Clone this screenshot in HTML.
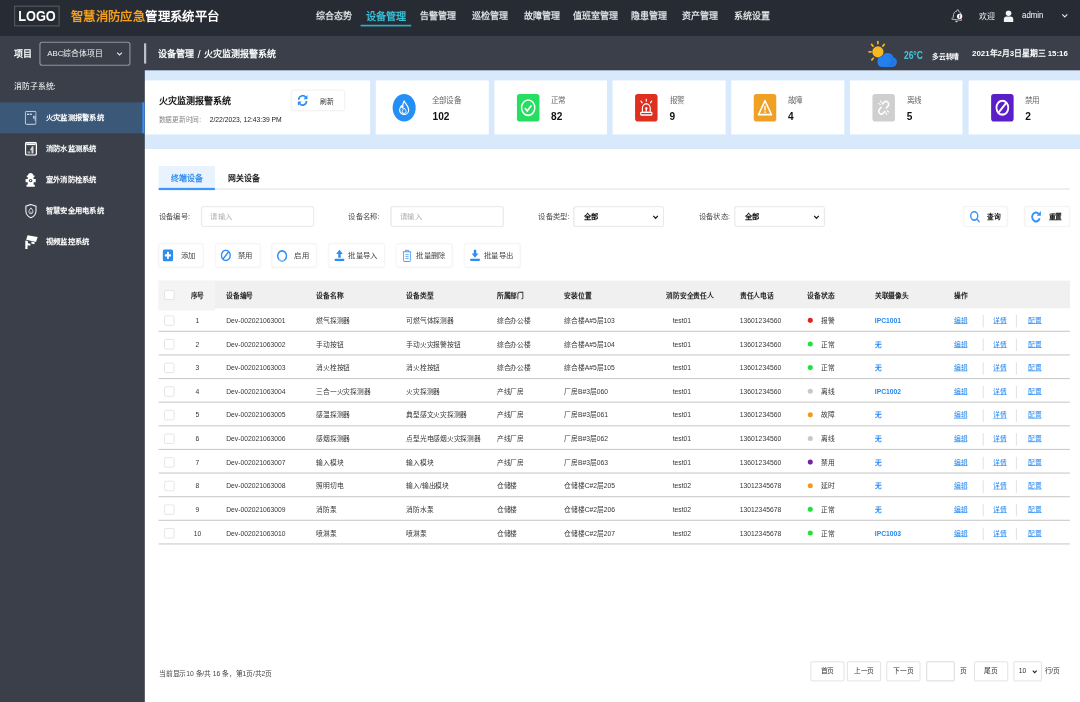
<!DOCTYPE html>
<html lang="zh-CN">
<head>
<meta charset="utf-8">
<title>智慧消防应急管理系统平台</title>
<style>
*{box-sizing:border-box;margin:0;padding:0}
html,body{width:1080px;height:702px;overflow:hidden;background:#fff}
body{font-family:"Liberation Sans",sans-serif;color:#333}
#stage{position:absolute;left:0;top:0;width:1920px;height:1248px;transform:scale(0.5625);transform-origin:0 0;filter:brightness(1);background:#fff;overflow:hidden}
svg{display:block}
/* top bar */
#top{position:absolute;left:0;top:0;width:1920px;height:64px;background:#272b34}
#logo{position:absolute;left:25px;top:10px;width:81px;height:37px;border:2px solid #565a63;color:#fff;font-weight:bold;font-size:27px;line-height:34px;text-align:center}
#logo span{display:inline-block;transform:scaleX(.84);transform-origin:50% 50%;margin:0 -10px}
#title{position:absolute;left:126px;top:0;height:64px;line-height:60px;font-size:22px;font-weight:bold;color:#fff;white-space:nowrap}
#title b{color:#f5a11d}
.nav{position:absolute;top:0;height:64px;line-height:58px;font-size:16px;font-weight:bold;color:#dddfe3;white-space:nowrap}
.nav.on{color:#38bfd6;font-weight:bold;font-size:18px}
.nav.on:after{content:"";position:absolute;left:-9px;right:-9px;top:43.500px;height:3px;background:#31adc4}
#top .t{position:absolute;top:0;height:64px;line-height:57px;font-size:14px;color:#f0f0f0;white-space:nowrap}
/* second bar */
#bar2{position:absolute;left:0;top:64px;width:1920px;height:61px;background:#3a3f4a;z-index:3}
#bar2 .t{position:absolute;top:0;height:60px;line-height:63px;color:#fff;white-space:nowrap}
#proj{position:absolute;left:70px;top:9.500px;width:162px;height:43px;border:2px solid #8e939d;border-radius:5px;color:#f2f2f2;font-size:14px;line-height:37px;padding-left:12px}
/* sidebar */
#side{position:absolute;left:0;top:124px;width:256.500px;height:1124px;background:#3a3f4a;z-index:2}
#sidebg{position:absolute;left:0;top:64px;width:256.500px;height:1190px;background:#3a3f4a;z-index:1}
#side .lab{position:absolute;left:25px;top:0;height:58px;line-height:60px;font-size:14px;color:#fff}
.mi{position:absolute;left:0;width:256.500px;height:55px;line-height:56px;color:#fff;font-size:13px;font-weight:bold;padding-left:81px}
.mi svg{position:absolute;left:44px;top:15px}
.mi.on{background:#3b5879;border-right:4px solid #3b8ff2}
/* main */
#main{position:absolute;left:256px;top:124px;width:1664px;height:1124px;background:#d8e9fc}
.card{position:absolute;top:19px;height:96px;background:#fff}
.card .lb{position:absolute;left:101px;top:25.500px;font-size:13.500px;line-height:20px;color:#666;white-space:nowrap}
.card .nm{position:absolute;left:101px;top:50.500px;font-size:18px;line-height:26px;font-weight:bold;color:#111}
.card .ic{position:absolute;left:40px;top:24px;width:40px;height:49px;border-radius:5px}
.card .ic svg{position:absolute;left:6px;top:8px;width:28px;height:33px}
#panel{position:absolute;left:0;top:141px;width:1664px;height:983px;background:#fff}
/* panel */
.tab{position:absolute;top:29.500px;width:100px;height:41px;line-height:44px;text-align:center;font-size:14px;font-weight:bold;color:#222}
.tab.on{background:#e9f3fe;color:#348ff1}
.fl{position:absolute;top:102px;height:36px;line-height:36px;font-size:13px;color:#4a4a4a;white-space:nowrap}
.inp{position:absolute;top:102px;height:36px;border:1px solid #dcdcdc;border-radius:4px;font-size:13px;line-height:34px;padding-left:15px;color:#b0b0b0;background:#fff;box-shadow:0 0 2px rgba(0,0,0,.05)}
.inp.sel{color:#111;font-weight:bold;padding-left:17px;font-size:13px}
.inp .chev{position:absolute;right:8.500px;top:14px;width:11px;height:9px}
.qb{position:absolute;top:102px;height:36px;border:1px solid #eee;border-radius:4px;font-size:12px;line-height:34px;padding-left:41px;color:#111;font-weight:bold;white-space:nowrap;box-shadow:0 0 3px rgba(0,0,0,.05)}
.ab{position:absolute;top:168px;height:42px;border:1px solid #efefef;border-radius:5px;font-size:13px;line-height:40px;padding-left:38px;color:#444;white-space:nowrap;box-shadow:0 0 3px rgba(0,0,0,.05)}
.ab .bi{position:absolute;left:6px;top:9px}
#tbl{position:absolute;left:26px;top:234px;width:1620px}
.tr{display:grid;grid-template-columns:38px 62px 180.500px 160px 161px 120px 181.300px 130.500px 120px 120px 140.500px 1fr;height:42px;line-height:44.500px;font-size:12px;color:#363636;border-bottom:2px solid #cccccc;white-space:nowrap}
.tr.th{height:49px;line-height:52.500px;background:#f0f0f0;font-weight:bold;color:#222;border-bottom:none}
.tr>div{overflow:visible;position:relative}
.c0,.c1{text-align:center}
.tr.th .c0,.tr.th .c1{background:#f4f4f4}
.c2{padding-left:20px}
.c7{padding-left:11px}
.th .c7{padding-left:0}
.cb{position:absolute;left:10px;top:13px;width:17.500px;height:17.500px;border:1.500px solid #d2d2d2;border-radius:3px;background:#fff}
.th .cb{top:16.500px}
.dot{display:inline-block;width:9px;height:9px;border-radius:50%;vertical-align:middle;margin:0 15px 2px 1px}
.cam{color:#2588f0;font-weight:bold}
.op a{color:#2588f0;text-decoration:underline}
.op s{display:inline-block;width:1.500px;height:22px;background:#e4e4e4;vertical-align:middle;margin:0 17px 0 27.500px}
.op s+a+s{margin:0 20px 0 16.500px}
.pb{position:absolute;top:911px;width:60px;height:35px;border:1.500px solid #cdcdcd;border-radius:2px;font-size:12px;line-height:33px;text-align:center;color:#333;white-space:nowrap;background:#fff}
</style>
</head>
<body>
<div id="stage">
<div id="top">
  <div id="logo"><span>LOGO</span></div>
  <div id="title"><b>智慧消防应急</b>管理系统平台</div>
  <div class="nav" style="left:562px">综合态势</div>
  <div class="nav on" style="left:650px">设备管理</div>
  <div class="nav" style="left:746px">告警管理</div>
  <div class="nav" style="left:839px">巡检管理</div>
  <div class="nav" style="left:931px">故障管理</div>
  <div class="nav" style="left:1018px">值班室管理</div>
  <div class="nav" style="left:1122px">隐患管理</div>
  <div class="nav" style="left:1213px">资产管理</div>
  <div class="nav" style="left:1305px">系统设置</div>
  <svg style="position:absolute;left:1690px;top:15px;transform:rotate(7deg)" width="22" height="27" viewBox="0 0 24 28"><path d="M11 3.2a1.6 1.6 0 0 1 3.2 0v1.2c3.4.8 5.6 3.7 5.6 7.4v5.4l2.2 3v1H3.2v-1l2.2-3v-5.4c0-3.7 2.200-6.600 5.600-7.400z" fill="none" stroke="#cfd0d3" stroke-width="1.600"/><path d="M10 23.500a2.600 2.600 0 0 0 5.200 0z" fill="#cfd0d3"/><circle cx="17.500" cy="14" r="5.200" fill="#fff"/><rect x="16.300" y="10.500" width="2.400" height="7" rx="1" fill="#e8413a"/></svg>
  <div class="t" style="left:1741px">欢迎</div>
  <svg style="position:absolute;left:1784px;top:18px" width="18" height="22" viewBox="0 0 20 24"><circle cx="10" cy="6" r="5.500" fill="#f2f2f2"/><path d="M0.500 23v-5c0-3 2.500-5.500 5.500-5.500h8c3 0 5.500 2.500 5.500 5.500v5z" fill="#f2f2f2"/></svg>
  <div class="t" style="left:1817px;top:-2px;color:#fff;font-size:17px;transform:scaleX(.82);transform-origin:0 50%">admin</div>
  <svg style="position:absolute;left:1887px;top:24px" width="12" height="8" viewBox="0 0 12 8"><path d="M1.500 1.500l4.500 4.500 4.500-4.500" fill="none" stroke="#e6e6e6" stroke-width="2"/></svg>
</div>
<div id="bar2">
  <div class="t" style="left:25px;font-size:16px;font-weight:bold">项目</div>
  <div id="proj">ABC综合体项目
    <svg style="position:absolute;right:12px;top:16px" width="11" height="8" viewBox="0 0 11 8"><path d="M1.200 1.500l4.300 4.300 4.300-4.300" fill="none" stroke="#e6e6e6" stroke-width="2"/></svg>
  </div>
  <div style="position:absolute;left:256px;top:13px;width:4px;height:36px;background:#bcbfc5"></div>
  <div class="t" style="left:280.500px;font-size:16px;font-weight:bold">设备管理<span style="margin:0 1px;font-size:20px;font-weight:normal;position:relative;top:1px"> / </span>火灾监测报警系统</div>
  <svg style="position:absolute;left:1542px;top:6px" width="54" height="50" viewBox="0 0 54 50">
    <g stroke="#f2b01e" stroke-width="3.200" stroke-linecap="round">
      <line x1="18.700" y1="4" x2="18.700" y2="7.500"/><line x1="7.500" y1="9" x2="10" y2="12"/><line x1="30" y1="9" x2="27.500" y2="12"/><line x1="3" y1="22.200" x2="6.500" y2="22.200"/><line x1="8" y1="36.500" x2="10.500" y2="33.500"/>
    </g>
    <circle cx="18.700" cy="22.200" r="10" fill="#f8b81f"/>
    <path d="M26 49h18a8.500 8.500 0 0 0 2.500-16.600a11 11 0 0 0-20.500-2.200a9.500 9.500 0 0 0 0 18.800z" fill="#2480ec"/>
    <path d="M28 47h16a6.500 6.500 0 0 0 1-12.900a9 9 0 0 0-8-6.100a11 11 0 0 1 3 14a9 9 0 0 1-12 5z" fill="#1b6fdc" opacity=".55"/>
  </svg>
  <div class="t" style="left:1607px;top:3px;font-size:19px;font-weight:bold;color:#3fc8dc;transform:scaleX(.79);transform-origin:0 50%">26°C</div>
  <div class="t" style="left:1657px;top:6px;font-size:12px;font-weight:bold">多云转晴</div>
  <div class="t" style="left:1728px;top:0px;font-size:14px;font-weight:bold">2021年2月3日星期三 15:16</div>
</div>
<div id="sidebg"></div>
<div id="side">
  <div class="lab">消防子系统:</div>
  <div class="mi on" style="top:58px">
    <svg width="21" height="25" viewBox="0 0 21 25"><rect x="1" y="1" width="19" height="23" rx="2" fill="none" stroke="#dfe6ee" stroke-width="1.600"/><rect x="4" y="5" width="3.500" height="2.400" fill="#dfe6ee"/><rect x="9" y="5" width="3.500" height="2.400" fill="#dfe6ee"/><rect x="15" y="9" width="2.200" height="5" fill="#dfe6ee"/><rect x="17.500" y="9" width="2" height="9" fill="#dfe6ee" opacity=".6"/></svg>
    火灾监测报警系统</div>
  <div class="mi" style="top:113px">
    <svg width="22" height="25" viewBox="0 0 22 25"><rect x="1.300" y="1.300" width="19.400" height="22.400" rx="3" fill="none" stroke="#fff" stroke-width="2.400"/><rect x="3" y="3" width="16" height="3" fill="#fff"/><path d="M13 8l-4 7h3v6h3.500v-13z" fill="#fff" opacity=".8"/><rect x="5" y="17" width="5" height="4" fill="#fff" opacity=".5"/></svg>
    消防水监测系统</div>
  <div class="mi" style="top:168px">
    <svg width="21" height="26" viewBox="0 0 21 26"><path d="M10.500 0.500c2.600 0 4.700 1.900 4.900 4.300h1.900v2.700h-1.600v3.500h3.800v6h-3.800v4.500h2.200v3.500h-14.800v-3.500h2.200v-4.500h-3.800v-6h3.800v-3.500h-1.600v-2.700h1.900c.2-2.400 2.300-4.300 4.900-4.300z" fill="#fff"/><circle cx="10.500" cy="14" r="3" fill="#3a3f4a"/><circle cx="10.500" cy="14" r="1.300" fill="#fff"/></svg>
    室外消防栓系统</div>
  <div class="mi" style="top:223px">
    <svg width="22" height="27" viewBox="0 0 22 27"><path d="M11 1.500l9 3.200v8c0 6-3.700 10.300-9 12.600c-5.300-2.300-9-6.600-9-12.600v-8z" fill="none" stroke="#eceef0" stroke-width="2"/><path d="M11 7.500c2.200 3 3.600 4.900 3.600 6.900a3.600 3.600 0 0 1-7.200 0c0-2 1.400-3.900 3.600-6.900z" fill="none" stroke="#eceef0" stroke-width="1.500"/><circle cx="11" cy="15" r="1.200" fill="#eceef0"/></svg>
    智慧安全用电系统</div>
  <div class="mi" style="top:278px">
    <svg width="24" height="26" viewBox="0 0 24 26"><path d="M5 1l18 3.500-3 8.500-17.500-4z" fill="#fff"/><path d="M1 10.500l4.500 1v4l4.500 1v3.500l-5 -1v6.500h-4z" fill="#fff"/><path d="M12 12.500l6 1.500-1 3-5.500-1.300z" fill="#fff"/></svg>
    视频监控系统</div>
</div>
<div id="main">
  <div class="card" style="left:0;width:402px">
    <div style="position:absolute;left:26px;top:23.500px;font-size:16px;line-height:24px;font-weight:bold;color:#111;white-space:nowrap">火灾监测报警系统</div>
    <div style="position:absolute;left:26px;top:60.500px;font-size:12px;line-height:18px;color:#888;white-space:nowrap">数据更新时间: <span style="color:#222;margin-left:12px">2/22/2023, 12:43:39 PM</span></div>
    <div style="position:absolute;left:262px;top:17px;width:95px;height:37px;border:1px solid #ececec;border-radius:4px;box-shadow:0 0 3px rgba(0,0,0,.06);font-size:12px;line-height:39px;padding-left:50px;color:#333;white-space:nowrap">
      <svg style="position:absolute;left:9px;top:7px" width="20" height="21" preserveAspectRatio="none" viewBox="0 0 20 20"><path d="M3 9a7 7 0 0 1 12.500-4.200" fill="none" stroke="#2e8df2" stroke-width="3"/><path d="M18.500 1v7h-7z" fill="#2e8df2"/><path d="M17 11a7 7 0 0 1-12.500 4.200" fill="none" stroke="#2e8df2" stroke-width="3"/><path d="M1.500 19v-7h7z" fill="#2e8df2"/></svg>刷新</div>
  </div>
  <div class="card" style="left:412px;width:200.700px">
    <div style="position:absolute;left:30px;top:24px;width:41px;height:49px;border-radius:50%;background:#2490f6">
      <svg style="position:absolute;left:9px;top:10px" width="23" height="30" viewBox="0 0 20 26"><path d="M10 2c1 4 7 7.500 7 14a7 7 0 0 1-14 0c0-3 1.500-5 3-6.500c0 2 .800 3 2 3.500c-.500-4 0-8 2-11z" fill="none" stroke="#fff" stroke-width="1.800" stroke-linejoin="round"/><path d="M10 13c1.500 2 3 3.500 3 5.500a3 3 0 0 1-6 0c0-2 1.500-3.500 3-5.500z" fill="none" stroke="#fff" stroke-width="1.500"/></svg>
    </div>
    <div class="lb" style="left:99.500px">全部设备</div><div class="nm">102</div>
  </div>
  <div class="card" style="left:622.700px;width:200.700px">
    <div class="ic" style="background:#26de60"><svg style="left:5px;top:7px;width:30px;height:35px" viewBox="0 0 28 28" preserveAspectRatio="none"><circle cx="14" cy="14" r="11" fill="none" stroke="#fff" stroke-width="2.400"/><path d="M8.500 14.500l4 4 7-8" fill="none" stroke="#fff" stroke-width="2.600"/></svg></div>
    <div class="lb">正常</div><div class="nm">82</div>
  </div>
  <div class="card" style="left:833.400px;width:200.700px">
    <div class="ic" style="background:#df301f"><svg preserveAspectRatio="none" width="28" height="28" viewBox="0 0 28 28"><path d="M7 21v-6a7 7 0 0 1 14 0v6z" fill="none" stroke="#fff" stroke-width="2"/><rect x="4" y="21" width="20" height="4" rx="1" fill="none" stroke="#fff" stroke-width="2"/><circle cx="14" cy="15" r="2" fill="#fff"/><rect x="13" y="15" width="2" height="5" fill="#fff"/><g stroke="#fff" stroke-width="2" stroke-linecap="round"><line x1="14" y1="1" x2="14" y2="4"/><line x1="4.500" y1="4" x2="6.500" y2="6.500"/><line x1="23.500" y1="4" x2="21.500" y2="6.500"/></g></svg></div>
    <div class="lb">报警</div><div class="nm">9</div>
  </div>
  <div class="card" style="left:1044.100px;width:200.700px">
    <div class="ic" style="background:#f0a024"><svg preserveAspectRatio="none" width="28" height="28" viewBox="0 0 28 28"><path d="M14 3.500l11.500 21h-23z" fill="none" stroke="#fff" stroke-width="2.600" stroke-linejoin="round"/><rect x="12.800" y="11" width="2.400" height="7" fill="#fff"/><rect x="12.800" y="19.500" width="2.400" height="2.400" fill="#fff"/></svg></div>
    <div class="lb">故障</div><div class="nm">4</div>
  </div>
  <div class="card" style="left:1254.800px;width:200.700px">
    <div class="ic" style="background:#cfcfcf"><svg preserveAspectRatio="none" width="28" height="30" viewBox="0 0 28 30"><g fill="none" stroke="#fff" stroke-width="2.600" stroke-linecap="round"><path d="M12 9l3-3a4.600 4.600 0 0 1 6.500 6.500l-3 3"/><path d="M16 21l-3 3a4.600 4.600 0 0 1-6.500-6.500l3-3"/></g><g stroke="#fff" stroke-width="1.800" stroke-linecap="round"><line x1="5" y1="8" x2="8" y2="10"/><line x1="8.500" y1="4" x2="10" y2="7"/><line x1="23" y1="22" x2="20" y2="20"/><line x1="19.500" y1="26" x2="18" y2="23"/></g></svg></div>
    <div class="lb">离线</div><div class="nm">5</div>
  </div>
  <div class="card" style="left:1465.500px;width:200.700px">
    <div class="ic" style="background:#5a1fc6"><svg preserveAspectRatio="none" width="28" height="28" viewBox="0 0 28 28"><circle cx="14" cy="14" r="10.500" fill="none" stroke="#fff" stroke-width="3.200"/><line x1="7" y1="21.500" x2="21" y2="6.500" stroke="#fff" stroke-width="3.200"/></svg></div>
    <div class="lb">禁用</div><div class="nm">2</div>
  </div>
  <div id="panel">
    <div class="tab on" style="left:26px">终端设备</div>
    <div class="tab" style="left:128px">网关设备</div>
    <div style="position:absolute;left:26px;top:70px;width:1620px;height:2px;background:#e2e2e2"></div>
    <div style="position:absolute;left:26px;top:69px;width:100px;height:3.500px;background:#3d97f5"></div>
    <div class="fl" style="left:26px">设备编号:</div><div class="inp" style="left:102px;width:200px">请输入</div>
    <div class="fl" style="left:363px">设备名称:</div><div class="inp" style="left:439px;width:200px">请输入</div>
    <div class="fl" style="left:701px">设备类型:</div><div class="inp sel" style="left:764px;width:160px">全部<svg class="chev" width="10" height="8" viewBox="0 0 10 8"><path d="M1.200 1.500l3.800 3.800 3.800-3.800" fill="none" stroke="#222" stroke-width="2.200"/></svg></div>
    <div class="fl" style="left:986px">设备状态:</div><div class="inp sel" style="left:1050px;width:160px">全部<svg class="chev" width="10" height="8" viewBox="0 0 10 8"><path d="M1.200 1.500l3.800 3.800 3.800-3.800" fill="none" stroke="#222" stroke-width="2.200"/></svg></div>
    <div class="qb" style="left:1457px;width:78px"><svg style="position:absolute;left:10px;top:6px;width:19px;height:23px" preserveAspectRatio="none" viewBox="0 0 19 19"><circle cx="8" cy="8" r="6.300" fill="none" stroke="#3d9af6" stroke-width="2.500"/><line x1="12.500" y1="12.500" x2="17.500" y2="17.500" stroke="#3d9af6" stroke-width="2.400"/></svg>查询</div>
    <div class="qb" style="left:1566px;width:80px"><svg style="position:absolute;left:9px;top:6px;width:20px;height:23px" preserveAspectRatio="none" viewBox="0 0 19 19"><path d="M15.500 11.500a6.500 6.500 0 1 1-1.600-6.300" fill="none" stroke="#3492f4" stroke-width="3"/><path d="M17.500 1v7h-7z" fill="#3492f4"/></svg>重置</div>
    <div class="ab" style="left:26px;width:80px;padding-left:38px"><span class="bi" style="left:6px"><svg preserveAspectRatio="none" style="width:19px;height:22px" viewBox="0 0 19 19"><rect x="0" y="0" width="19" height="19" rx="4" fill="#2e8df2"/><rect x="8" y="4" width="3.200" height="11" rx="1" fill="#fff"/><rect x="4" y="7.900" width="11" height="3.200" rx="1" fill="#fff"/></svg></span>添加</div>
    <div class="ab" style="left:126.5px;width:80px;padding-left:39px"><span class="bi" style="left:8px"><svg preserveAspectRatio="none" style="width:19px;height:22px" viewBox="0 0 19 19"><circle cx="9.500" cy="9.500" r="7.800" fill="none" stroke="#2e8df2" stroke-width="2.400"/><line x1="4.500" y1="15" x2="14.500" y2="4" stroke="#2e8df2" stroke-width="2.400"/></svg></span>禁用</div>
    <div class="ab" style="left:227px;width:80px;padding-left:39px"><span class="bi" style="left:8px"><svg preserveAspectRatio="none" style="width:19px;height:24px" viewBox="0 0 19 21"><circle cx="9.500" cy="10.500" r="7.800" fill="none" stroke="#2e8df2" stroke-width="2.600"/><circle cx="9.500" cy="10.500" r="7.800" fill="none" stroke="#8cc4fa" stroke-width="2.600" stroke-dasharray="10 39" stroke-dashoffset="-8"/></svg></span>启用</div>
    <div class="ab" style="left:327.5px;width:100px;padding-left:35px"><span class="bi" style="left:9px"><svg preserveAspectRatio="none" style="width:19px;height:22px" viewBox="0 0 19 19"><path d="M9.500 1l6 6.500h-3.800v5.500h-4.400v-5.500h-3.800z" fill="#2e8df2"/><rect x="1" y="14.500" width="17" height="3.500" rx="1" fill="#2e8df2"/></svg></span>批量导入</div>
    <div class="ab" style="left:448px;width:100px;padding-left:35px"><span class="bi" style="left:10px"><svg preserveAspectRatio="none" style="width:17px;height:23px" viewBox="0 0 17 20"><path d="M1 4h15M6 4v-2.500h5v2.500M2.500 4v13.500a1.500 1.500 0 0 0 1.500 1.500h9a1.500 1.500 0 0 0 1.500-1.500v-13.500" fill="none" stroke="#4f9ff5" stroke-width="1.600"/><path d="M5.500 8.500h6M5.500 11.500h6M5.500 14.500h6" stroke="#4f9ff5" stroke-width="1.400"/></svg></span>批量删除</div>
    <div class="ab" style="left:568.5px;width:100px;padding-left:35px"><span class="bi" style="left:9px"><svg preserveAspectRatio="none" style="width:19px;height:22px" viewBox="0 0 19 19"><path d="M9.500 13l6-6.500h-3.800v-5.500h-4.400v5.500h-3.800z" fill="#2e8df2"/><rect x="1" y="14.500" width="17" height="3.500" rx="1" fill="#2e8df2"/></svg></span>批量导出</div>
    <div id="tbl">
      <div class="tr th"><div class="c0"><i class="cb"></i></div><div class="c1">序号</div><div class="c2">设备编号</div><div>设备名称</div><div>设备类型</div><div>所属部门</div><div>安装位置</div><div>消防安全责任人</div><div>责任人电话</div><div>设备状态</div><div>关联摄像头</div><div>操作</div></div>
      <div class="tr"><div class="c0"><i class="cb"></i></div><div class="c1">1</div><div class="c2">Dev-002021063001</div><div>燃气探测器</div><div>可燃气体探测器</div><div>综合办公楼</div><div>综合楼A#5层103</div><div class="c7">test01</div><div>13601234560</div><div><i class="dot" style="background:#e0241b"></i>报警</div><div class="cam">IPC1001</div><div class="op"><a>编辑</a><s></s><a>详情</a><s></s><a>配置</a></div></div>
      <div class="tr"><div class="c0"><i class="cb"></i></div><div class="c1">2</div><div class="c2">Dev-002021063002</div><div>手动按钮</div><div>手动火灾报警按钮</div><div>综合办公楼</div><div>综合楼A#5层104</div><div class="c7">test01</div><div>13601234560</div><div><i class="dot" style="background:#22e03c"></i>正常</div><div class="cam">无</div><div class="op"><a>编辑</a><s></s><a>详情</a><s></s><a>配置</a></div></div>
      <div class="tr"><div class="c0"><i class="cb"></i></div><div class="c1">3</div><div class="c2">Dev-002021063003</div><div>消火栓按钮</div><div>消火栓按钮</div><div>综合办公楼</div><div>综合楼A#5层105</div><div class="c7">test01</div><div>13601234560</div><div><i class="dot" style="background:#22e03c"></i>正常</div><div class="cam">无</div><div class="op"><a>编辑</a><s></s><a>详情</a><s></s><a>配置</a></div></div>
      <div class="tr"><div class="c0"><i class="cb"></i></div><div class="c1">4</div><div class="c2">Dev-002021063004</div><div>三合一火灾探测器</div><div>火灾探测器</div><div>产线厂房</div><div>厂房B#3层060</div><div class="c7">test01</div><div>13601234560</div><div><i class="dot" style="background:#c8c8c8"></i>离线</div><div class="cam">IPC1002</div><div class="op"><a>编辑</a><s></s><a>详情</a><s></s><a>配置</a></div></div>
      <div class="tr"><div class="c0"><i class="cb"></i></div><div class="c1">5</div><div class="c2">Dev-002021063005</div><div>感温探测器</div><div>典型感文火灾探测器</div><div>产线厂房</div><div>厂房B#3层061</div><div class="c7">test01</div><div>13601234560</div><div><i class="dot" style="background:#f39a1e"></i>故障</div><div class="cam">无</div><div class="op"><a>编辑</a><s></s><a>详情</a><s></s><a>配置</a></div></div>
      <div class="tr"><div class="c0"><i class="cb"></i></div><div class="c1">6</div><div class="c2">Dev-002021063006</div><div>感烟探测器</div><div>点型光电感烟火灾探测器</div><div>产线厂房</div><div>厂房B#3层062</div><div class="c7">test01</div><div>13601234560</div><div><i class="dot" style="background:#c8c8c8"></i>离线</div><div class="cam">无</div><div class="op"><a>编辑</a><s></s><a>详情</a><s></s><a>配置</a></div></div>
      <div class="tr"><div class="c0"><i class="cb"></i></div><div class="c1">7</div><div class="c2">Dev-002021063007</div><div>输入模块</div><div>输入模块</div><div>产线厂房</div><div>厂房B#3层063</div><div class="c7">test01</div><div>13601234560</div><div><i class="dot" style="background:#7a1fa2"></i>禁用</div><div class="cam">无</div><div class="op"><a>编辑</a><s></s><a>详情</a><s></s><a>配置</a></div></div>
      <div class="tr"><div class="c0"><i class="cb"></i></div><div class="c1">8</div><div class="c2">Dev-002021063008</div><div>照明切电</div><div>输入/输出模块</div><div>仓储楼</div><div>仓储楼C#2层205</div><div class="c7">test02</div><div>13012345678</div><div><i class="dot" style="background:#f39a1e"></i>延时</div><div class="cam">无</div><div class="op"><a>编辑</a><s></s><a>详情</a><s></s><a>配置</a></div></div>
      <div class="tr"><div class="c0"><i class="cb"></i></div><div class="c1">9</div><div class="c2">Dev-002021063009</div><div>消防泵</div><div>消防水泵</div><div>仓储楼</div><div>仓储楼C#2层206</div><div class="c7">test02</div><div>13012345678</div><div><i class="dot" style="background:#22e03c"></i>正常</div><div class="cam">无</div><div class="op"><a>编辑</a><s></s><a>详情</a><s></s><a>配置</a></div></div>
      <div class="tr"><div class="c0"><i class="cb"></i></div><div class="c1">10</div><div class="c2">Dev-002021063010</div><div>喷淋泵</div><div>喷淋泵</div><div>仓储楼</div><div>仓储楼C#2层207</div><div class="c7">test02</div><div>13012345678</div><div><i class="dot" style="background:#22e03c"></i>正常</div><div class="cam">IPC1003</div><div class="op"><a>编辑</a><s></s><a>详情</a><s></s><a>配置</a></div></div>
    </div>
    <div style="position:absolute;left:27px;top:922.500px;font-size:12px;line-height:18px;color:#444;white-space:nowrap">当前显示10 条/共 16 条，第1页/共2页</div>
    <div class="pb" style="left:1185px">首页</div>
    <div class="pb" style="left:1250px">上一页</div>
    <div class="pb" style="left:1320px">下一页</div>
    <div class="pb" style="left:1391px;width:50px;border-color:#bdbdbd"></div>
    <div style="position:absolute;left:1451px;top:911px;line-height:35px;font-size:12px;color:#333">页</div>
    <div class="pb" style="left:1476px">尾页</div>
    <div class="pb" style="left:1546px;width:50px;text-align:left;padding-left:8px">10<svg style="position:absolute;right:7px;top:14px" width="9" height="7" viewBox="0 0 9 7"><path d="M1 1.200l3.500 3.500 3.500-3.500" fill="none" stroke="#222" stroke-width="2"/></svg></div>
    <div style="position:absolute;left:1601px;top:911px;line-height:35px;font-size:12px;color:#333;white-space:nowrap">行/页</div>
  </div>
</div>
</div>
</body>
</html>
